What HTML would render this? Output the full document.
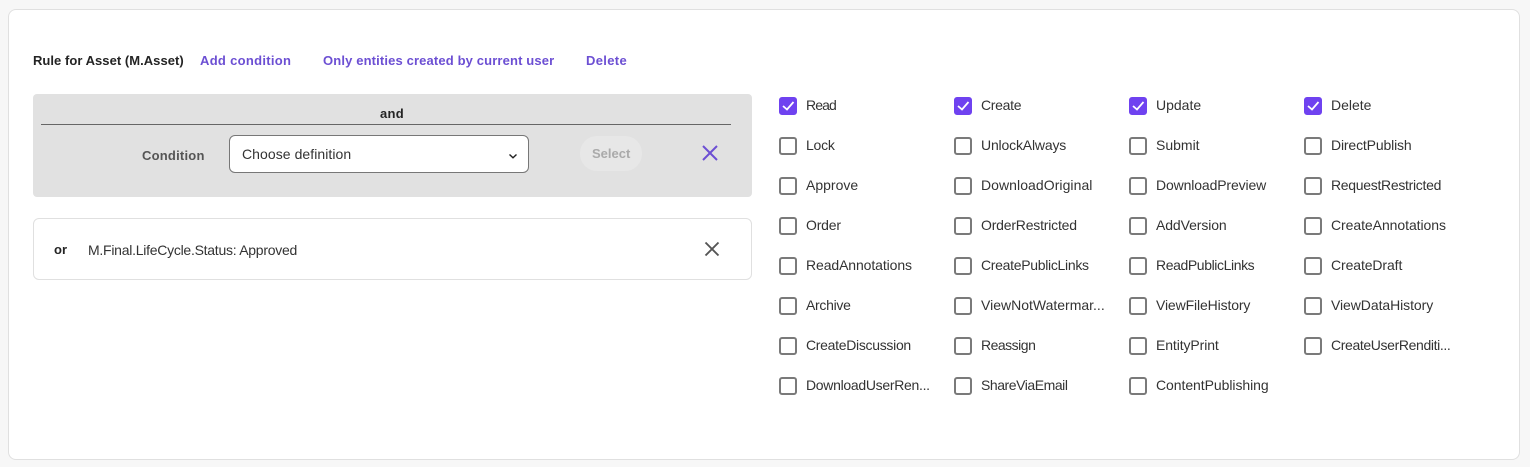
<!DOCTYPE html>
<html><head><meta charset="utf-8">
<style>
html,body{margin:0;padding:0;width:1530px;height:467px;overflow:hidden;background:#f7f7f7;font-family:"Liberation Sans",sans-serif;font-size:14px;color:#242424}
.a{position:absolute;white-space:nowrap;line-height:20px}
.b{font-weight:bold;font-size:13px}
.p{color:#6c4fd3}
.cb{position:absolute;width:14px;height:14px;border:2px solid #7a7a7a;border-radius:3px;background:#fff}
.cb.on{background:#6f42f0;border-color:#6f42f0}
.cb svg{position:absolute;left:0;top:0}
.t{position:absolute;white-space:nowrap;line-height:20px;font-size:14px;color:#333}
</style></head><body>
<div style="position:absolute;left:8px;top:9px;width:1510px;height:449px;background:#fff;border:1px solid #e0e0e0;border-radius:8px"></div>

<div class="a b" style="left:33px;top:51px;color:#242424;letter-spacing:.04px">Rule for Asset (M.Asset)</div>
<div class="a b p" style="left:200px;top:51px;letter-spacing:.3px">Add condition</div>
<div class="a b p" style="left:323px;top:51px;letter-spacing:.14px">Only entities created by current user</div>
<div class="a b p" style="left:586px;top:51px;letter-spacing:.33px">Delete</div>

<div style="position:absolute;left:33px;top:94px;width:719px;height:103px;background:#e1e1e1;border-radius:4px"></div>
<div class="a b" style="left:380px;top:104px;letter-spacing:.3px">and</div>
<div style="position:absolute;left:41px;top:124px;width:690px;height:1px;background:#666"></div>
<div class="a b" style="left:142px;top:146px;color:#555;letter-spacing:.22px">Condition</div>
<div style="position:absolute;left:229px;top:135px;width:298px;height:36px;background:#fff;border:1px solid #777;border-radius:6px"></div>
<div class="a" style="left:242px;top:144px;color:#333;letter-spacing:.06px">Choose definition</div>
<svg style="position:absolute;left:506px;top:151px" width="14" height="10"><path d="M3.5 3.5L7 6.8L10.5 3.5" fill="none" stroke="#222" stroke-width="1.4"/></svg>
<div style="position:absolute;left:580px;top:136px;width:62px;height:35px;background:#e7e7e7;border-radius:17px"></div>
<div class="a b" style="left:592px;top:144px;color:#aaa">Select</div>
<svg style="position:absolute;left:700px;top:143px" width="20" height="20"><path d="M3 3L17 17M17 3L3 17" fill="none" stroke="#6c4fd3" stroke-width="2"/></svg>

<div style="position:absolute;left:33px;top:218px;width:717px;height:60px;background:#fff;border:1px solid #e0e0e0;border-radius:6px"></div>
<div class="a b" style="left:54px;top:240px">or</div>
<div class="a" style="left:88px;top:240px;color:#333;letter-spacing:-.26px">M.Final.LifeCycle.Status: Approved</div>
<svg style="position:absolute;left:702px;top:239px" width="20" height="20"><path d="M3.5 3.5L16.5 16.5M16.5 3.5L3.5 16.5" fill="none" stroke="#555" stroke-width="1.9"/></svg>

<div class="cb on" style="left:779px;top:97px"><svg width="14" height="14"><path d="M2 7L6 10.5L12.5 3" fill="none" stroke="#fff" stroke-width="1.8"/></svg></div><div class="t" style="left:806px;top:95px;letter-spacing:-.9px">Read</div>
<div class="cb on" style="left:954px;top:97px"><svg width="14" height="14"><path d="M2 7L6 10.5L12.5 3" fill="none" stroke="#fff" stroke-width="1.8"/></svg></div><div class="t" style="left:981px;top:95px;letter-spacing:-.3px">Create</div>
<div class="cb on" style="left:1129px;top:97px"><svg width="14" height="14"><path d="M2 7L6 10.5L12.5 3" fill="none" stroke="#fff" stroke-width="1.8"/></svg></div><div class="t" style="left:1156px;top:95px">Update</div>
<div class="cb on" style="left:1304px;top:97px"><svg width="14" height="14"><path d="M2 7L6 10.5L12.5 3" fill="none" stroke="#fff" stroke-width="1.8"/></svg></div><div class="t" style="left:1331px;top:95px">Delete</div>

<div class="cb" style="left:779px;top:137px"></div><div class="t" style="left:806px;top:135px;letter-spacing:-.25px">Lock</div>
<div class="cb" style="left:954px;top:137px"></div><div class="t" style="left:981px;top:135px;letter-spacing:-.17px">UnlockAlways</div>
<div class="cb" style="left:1129px;top:137px"></div><div class="t" style="left:1156px;top:135px">Submit</div>
<div class="cb" style="left:1304px;top:137px"></div><div class="t" style="left:1331px;top:135px;letter-spacing:-.15px">DirectPublish</div>

<div class="cb" style="left:779px;top:177px"></div><div class="t" style="left:806px;top:175px">Approve</div>
<div class="cb" style="left:954px;top:177px"></div><div class="t" style="left:981px;top:175px;letter-spacing:.06px">DownloadOriginal</div>
<div class="cb" style="left:1129px;top:177px"></div><div class="t" style="left:1156px;top:175px;letter-spacing:-.13px">DownloadPreview</div>
<div class="cb" style="left:1304px;top:177px"></div><div class="t" style="left:1331px;top:175px;letter-spacing:-.3px">RequestRestricted</div>

<div class="cb" style="left:779px;top:217px"></div><div class="t" style="left:806px;top:215px;letter-spacing:-.2px">Order</div>
<div class="cb" style="left:954px;top:217px"></div><div class="t" style="left:981px;top:215px;letter-spacing:-.2px">OrderRestricted</div>
<div class="cb" style="left:1129px;top:217px"></div><div class="t" style="left:1156px;top:215px;letter-spacing:-.1px">AddVersion</div>
<div class="cb" style="left:1304px;top:217px"></div><div class="t" style="left:1331px;top:215px;letter-spacing:-.06px">CreateAnnotations</div>

<div class="cb" style="left:779px;top:257px"></div><div class="t" style="left:806px;top:255px;letter-spacing:-.1px">ReadAnnotations</div>
<div class="cb" style="left:954px;top:257px"></div><div class="t" style="left:981px;top:255px;letter-spacing:-.3px">CreatePublicLinks</div>
<div class="cb" style="left:1129px;top:257px"></div><div class="t" style="left:1156px;top:255px;letter-spacing:-.4px">ReadPublicLinks</div>
<div class="cb" style="left:1304px;top:257px"></div><div class="t" style="left:1331px;top:255px;letter-spacing:-.1px">CreateDraft</div>

<div class="cb" style="left:779px;top:297px"></div><div class="t" style="left:806px;top:295px;letter-spacing:-.3px">Archive</div>
<div class="cb" style="left:954px;top:297px"></div><div class="t" style="left:981px;top:295px">ViewNotWatermar...</div>
<div class="cb" style="left:1129px;top:297px"></div><div class="t" style="left:1156px;top:295px;letter-spacing:-.13px">ViewFileHistory</div>
<div class="cb" style="left:1304px;top:297px"></div><div class="t" style="left:1331px;top:295px;letter-spacing:-.07px">ViewDataHistory</div>

<div class="cb" style="left:779px;top:337px"></div><div class="t" style="left:806px;top:335px;letter-spacing:-.3px">CreateDiscussion</div>
<div class="cb" style="left:954px;top:337px"></div><div class="t" style="left:981px;top:335px;letter-spacing:-.5px">Reassign</div>
<div class="cb" style="left:1129px;top:337px"></div><div class="t" style="left:1156px;top:335px;letter-spacing:-.1px">EntityPrint</div>
<div class="cb" style="left:1304px;top:337px"></div><div class="t" style="left:1331px;top:335px;letter-spacing:-.37px">CreateUserRenditi...</div>

<div class="cb" style="left:779px;top:377px"></div><div class="t" style="left:806px;top:375px;letter-spacing:-.3px">DownloadUserRen...</div>
<div class="cb" style="left:954px;top:377px"></div><div class="t" style="left:981px;top:375px;letter-spacing:-.45px">ShareViaEmail</div>
<div class="cb" style="left:1129px;top:377px"></div><div class="t" style="left:1156px;top:375px;letter-spacing:-.06px">ContentPublishing</div>
</body></html>
